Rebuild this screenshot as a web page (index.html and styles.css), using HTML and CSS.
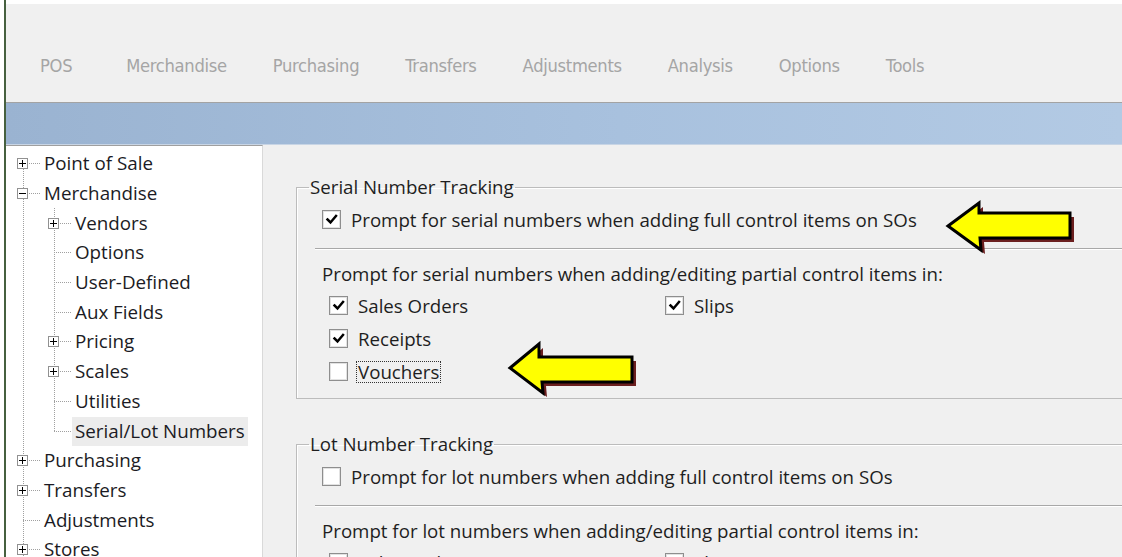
FILE: index.html
```html
<!DOCTYPE html>
<html lang="en">
<head>
<meta charset="utf-8">
<title>Options - Serial/Lot Numbers</title>
<link rel="stylesheet" href="styles.css">
</head>
<body>
<div class="app">
  <nav class="menubar">
    <span class="menu-item first">POS</span>
    <span class="menu-item">Merchandise</span>
    <span class="menu-item">Purchasing</span>
    <span class="menu-item">Transfers</span>
    <span class="menu-item">Adjustments</span>
    <span class="menu-item">Analysis</span>
    <span class="menu-item">Options</span>
    <span class="menu-item">Tools</span>
  </nav>
  <div class="band"></div>
  <div class="main">
    <aside class="tree-pane">
      <ul class="tree">
        <li><div class="row"><span class="twist plus"></span><span class="hline"></span><span class="label">Point of Sale</span></div></li>
        <li>
          <div class="row"><span class="twist minus"></span><span class="hline"></span><span class="label">Merchandise</span></div>
          <ul class="sub">
            <li><div class="row"><span class="twist plus"></span><span class="hline"></span><span class="label">Vendors</span></div></li>
            <li><div class="row"><span class="twist leaf"></span><span class="hline"></span><span class="label">Options</span></div></li>
            <li><div class="row"><span class="twist leaf"></span><span class="hline"></span><span class="label">User-Defined</span></div></li>
            <li><div class="row"><span class="twist leaf"></span><span class="hline"></span><span class="label">Aux Fields</span></div></li>
            <li><div class="row"><span class="twist plus"></span><span class="hline"></span><span class="label">Pricing</span></div></li>
            <li><div class="row"><span class="twist plus"></span><span class="hline"></span><span class="label">Scales</span></div></li>
            <li><div class="row"><span class="twist leaf"></span><span class="hline"></span><span class="label">Utilities</span></div></li>
            <li><div class="row"><span class="twist leaf"></span><span class="hline"></span><span class="label selected">Serial/Lot Numbers</span></div></li>
          </ul>
        </li>
        <li><div class="row"><span class="twist plus"></span><span class="hline"></span><span class="label">Purchasing</span></div></li>
        <li><div class="row"><span class="twist plus"></span><span class="hline"></span><span class="label">Transfers</span></div></li>
        <li><div class="row"><span class="twist leaf"></span><span class="hline"></span><span class="label">Adjustments</span></div></li>
        <li><div class="row"><span class="twist plus"></span><span class="hline"></span><span class="label">Stores</span></div></li>
      </ul>
    </aside>

    <section class="settings">
      <fieldset class="group">
        <legend>Serial Number Tracking</legend>
        <div class="opt lead">
          <span class="cb"><svg viewBox="0 0 17 17"><path d="M4.5 8.5 L7.5 11.5 L13 5"/></svg></span>
          <span class="opt-text">Prompt for serial numbers when adding full control items on SOs</span>
        </div>
        <div class="sep"></div>
        <p class="caption">Prompt for serial numbers when adding/editing partial control items in:</p>
        <div class="choices">
          <div class="opt">
            <span class="cb"><svg viewBox="0 0 17 17"><path d="M4.5 8.5 L7.5 11.5 L13 5"/></svg></span>
            <span class="opt-text">Sales Orders</span>
          </div>
          <div class="opt">
            <span class="cb"><svg viewBox="0 0 17 17"><path d="M4.5 8.5 L7.5 11.5 L13 5"/></svg></span>
            <span class="opt-text">Slips</span>
          </div>
          <div class="opt">
            <span class="cb"><svg viewBox="0 0 17 17"><path d="M4.5 8.5 L7.5 11.5 L13 5"/></svg></span>
            <span class="opt-text">Receipts</span>
          </div>
          <div></div>
          <div class="opt">
            <span class="cb"></span>
            <span class="opt-text focused">Vouchers</span>
          </div>
        </div>
      </fieldset>

      <fieldset class="group">
        <legend>Lot Number Tracking</legend>
        <div class="opt lead">
          <span class="cb"></span>
          <span class="opt-text">Prompt for lot numbers when adding full control items on SOs</span>
        </div>
        <div class="sep"></div>
        <p class="caption">Prompt for lot numbers when adding/editing partial control items in:</p>
        <div class="choices">
          <div class="opt">
            <span class="cb"></span>
            <span class="opt-text">Sales Orders</span>
          </div>
          <div class="opt">
            <span class="cb"></span>
            <span class="opt-text">Slips</span>
          </div>
        </div>
      </fieldset>
    </section>
  </div>
</div>

<!-- callout arrows drawn on top of the window -->
<svg class="callouts" viewBox="0 0 1122 557" width="1122" height="557">
  <g transform="translate(4 4)" fill="#6b1f1f">
    <path d="M948 226 L979 203 L979 213 L1070 213 L1070 238 L980 238 L981 250 Z"/>
    <path d="M510 368 L539 344 L539 357 L632 357 L632 382 L542 382 L543 393 Z"/>
  </g>
  <g fill="#ffff00" stroke="#000" stroke-width="3" stroke-linejoin="miter">
    <path d="M948 226 L979 203 L979 213 L1070 213 L1070 238 L980 238 L981 250 Z"/>
    <path d="M510 368 L539 344 L539 357 L632 357 L632 382 L542 382 L543 393 Z"/>
  </g>
</svg>
</body>
</html>
```

FILE: styles.css
```css
html, body {
  margin: 0;
  padding: 0;
  background: #ffffff;
}

body {
  width: 1122px;
  height: 557px;
  overflow: hidden;
  position: relative;
  font-family: "Open Sans", "Noto Sans", sans-serif;
  color: #1e1e1e;
}

.app {
  margin-left: 4px;
  border-left: 2px solid #46603f;
  padding-top: 4px;
  height: 553px;
  display: flex;
  flex-direction: column;
  background: #ffffff;
}

/* top navigation */
.menubar {
  height: 99px;
  box-sizing: border-box;
  background: #f0f0f0;
  border-bottom: 1px solid #a3a3a3;
  display: flex;
  align-items: flex-start;
  gap: 46px;
  padding: 52px 0 0 34px;
}

.menu-item {
  font-family: "DejaVu Sans", sans-serif;
  font-stretch: condensed;
  font-size: 18.2px;
  line-height: 20px;
  color: #a5a5a5;
  letter-spacing: -0.3px;
}

.menu-item.first {
  margin-right: 8px;
}

.band {
  height: 41px;
  background: linear-gradient(to right, #9ab3d1 0%, #a8c1de 55%, #b3cae4 100%);
  border-bottom: 1px solid #c8d5e5;
}

.main {
  flex: 1;
  display: flex;
  min-height: 0;
}

/* navigation tree */
.tree-pane {
  width: 257px;
  box-sizing: border-box;
  background: #ffffff;
  border-top: 1px solid #9f9f9f;
  border-right: 1px solid #d9d9d9;
  padding-top: 3px;
  overflow: hidden;
}

.tree, .sub {
  list-style: none;
  margin: 0;
  padding: 0;
}

.tree {
  background: repeating-linear-gradient(to bottom, #a0a0a0 0 1px, transparent 1px 2px) 17px 16px / 1px 100% no-repeat;
}

.sub {
  background: repeating-linear-gradient(to bottom, #a0a0a0 0 1px, transparent 1px 2px) 48px 0 / 1px calc(100% - 15px) no-repeat;
}

.row {
  height: 29.7px;
  display: flex;
  align-items: center;
  padding-left: 11px;
  font-size: 18.8px;
}

.sub .row {
  padding-left: 42px;
}

.twist {
  width: 11px;
  height: 11px;
  box-sizing: border-box;
  flex: none;
}

.twist.plus, .twist.minus {
  border: 1px solid #919191;
  background:
    linear-gradient(#000, #000) 1px 4px / 7px 1px no-repeat,
    #ffffff;
}

.twist.plus {
  background:
    linear-gradient(#000, #000) 1px 4px / 7px 1px no-repeat,
    linear-gradient(#000, #000) 4px 1px / 1px 7px no-repeat,
    #ffffff;
}

.twist.leaf {
  background: repeating-linear-gradient(to right, #a0a0a0 0 1px, transparent 1px 2px) 6px 5px / 5px 1px no-repeat;
}

.hline {
  width: 13px;
  height: 11px;
  flex: none;
  background: repeating-linear-gradient(to right, transparent 0 1px, #a0a0a0 1px 2px) 0 5px / 100% 1px no-repeat;
}

.label {
  line-height: 29px;
  padding: 0 3px;
  color: #1b1b24;
  white-space: nowrap;
}

.label.selected {
  background: #ececec;
}

/* settings area */
.settings {
  flex: 1;
  background: #f0f0f0;
  overflow: hidden;
  padding: 30px 0 0 33px;
  font-size: 18.7px;
}

.group {
  width: 1000px;
  margin: 0 0 33px 0;
  padding: 4px 0 10px 0;
  border: 1px solid #bcbcbc;
  box-shadow: inset 1px 1px 0 #ffffff;
}

.group legend {
  margin-left: 12px;
  padding: 0 1px;
  line-height: 24px;
}

.opt {
  height: 33px;
  display: flex;
  align-items: center;
  white-space: nowrap;
}

.opt.lead {
  padding-left: 25px;
}

.cb {
  width: 19px;
  height: 19px;
  box-sizing: border-box;
  flex: none;
  border: 1px solid #8e8e8e;
  background: #ffffff;
  box-shadow: inset 0 0 0 1px #e2e2e2;
  margin-right: 10px;
}

.cb svg {
  display: block;
  width: 17px;
  height: 17px;
}

.cb path {
  fill: none;
  stroke: #000;
  stroke-width: 2.5;
  stroke-linecap: square;
}

.opt-text {
  line-height: 24px;
}

.opt-text.focused {
  border: 1px dotted #333;
  padding: 0 1px;
  margin-left: -2px;
  line-height: 20px;
}

.sep {
  margin: 12px 0 0 18px;
  border-top: 1px solid #a8a8a8;
  border-bottom: 1px solid #ffffff;
}

.caption {
  margin: 12px 0 0 25px;
  line-height: 24px;
}

.choices {
  display: grid;
  grid-template-columns: 336px auto;
  margin-top: 3px;
  padding-left: 32px;
}

.callouts {
  position: absolute;
  left: 0;
  top: 0;
  pointer-events: none;
}
```
